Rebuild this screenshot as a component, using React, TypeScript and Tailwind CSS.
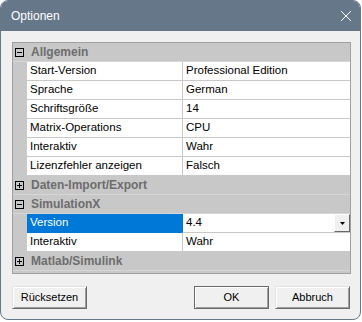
import type { ReactNode } from 'react'

type Prop = { name: string; value: string; selected?: boolean; dropdown?: boolean }
type Category = { title: string; open: boolean; props: Prop[] }

const categories: Category[] = [
  {
    title: 'Allgemein',
    open: true,
    props: [
      { name: 'Start-Version', value: 'Professional Edition' },
      { name: 'Sprache', value: 'German' },
      { name: 'Schriftsgröße', value: '14' },
      { name: 'Matrix-Operations', value: 'CPU' },
      { name: 'Interaktiv', value: 'Wahr' },
      { name: 'Lizenzfehler anzeigen', value: 'Falsch' },
    ],
  },
  { title: 'Daten-Import/Export', open: false, props: [] },
  {
    title: 'SimulationX',
    open: true,
    props: [
      { name: 'Version', value: '4.4', selected: true, dropdown: true },
      { name: 'Interaktiv', value: 'Wahr' },
    ],
  },
  { title: 'Matlab/Simulink', open: false, props: [] },
]

function ExpandBox({ open }: { open: boolean }) {
  return (
    <svg width="9" height="9" viewBox="0 0 9 9" className="block">
      <rect x="0.5" y="0.5" width="8" height="8" fill="none" stroke="#000" />
      <line x1="2" y1="4.5" x2="7" y2="4.5" stroke="#000" />
      {!open && <line x1="4.5" y1="2" x2="4.5" y2="7" stroke="#000" />}
    </svg>
  )
}

function CategoryRow({ title, open }: { title: string; open: boolean }) {
  return (
    <div className="flex h-[19px] items-center bg-[#c8c8c8] border-b border-[#d6d6d6]">
      <div className="w-[14px] pl-[2px] shrink-0">
        <ExpandBox open={open} />
      </div>
      <div className="pl-[4px] text-[12px] font-bold text-[#6d6d6d] leading-none">{title}</div>
    </div>
  )
}

function PropRow({ p }: { p: Prop }) {
  return (
    <div className="flex h-[19px]">
      <div className="w-[14px] shrink-0 bg-[#c8c8c8]" />
      <div
        className={`w-[155px] shrink-0 flex items-center pl-[3px] border-b ${
          p.selected ? 'bg-[#0078d7] text-white border-[#0078d7]' : 'bg-white text-black border-[#c8c8c8]'
        }`}
      >
        {p.name}
      </div>
      <div
        className={`flex-1 flex items-center bg-white border-b border-[#c8c8c8] border-l ${
          p.selected ? 'border-l-[#0078d7]' : 'border-l-[#c8c8c8]'
        }`}
      >
        <span className="pl-[3px] flex-1">{p.value}</span>
        {p.dropdown && (
          <div className="w-[16px] h-[18px] self-start bg-[#f0f0f0] border border-t-white border-l-white border-b-[#696969] border-r-[#696969] flex items-center justify-center">
            <svg width="5" height="3" viewBox="0 0 5 3">
              <polygon points="0,0 5,0 2.5,3" fill="#000" />
            </svg>
          </div>
        )}
      </div>
    </div>
  )
}

function Button({ children, isDefault }: { children: ReactNode; isDefault?: boolean }) {
  return (
    <button
      className={`w-[75px] h-[23px] bg-[#f0f0f0] text-[11px] text-black border ${
        isDefault
          ? 'border-[#696969] shadow-[inset_1px_1px_0_#fff,inset_-1px_-1px_0_#a0a0a0]'
          : 'border-t-[#e3e3e3] border-l-[#e3e3e3] border-b-[#696969] border-r-[#696969] shadow-[inset_1px_1px_0_#fff,inset_-1px_-1px_0_#a0a0a0]'
      }`}
    >
      {children}
    </button>
  )
}

export default function App() {
  return (
    <div className="w-[362px] h-[322px] bg-white" style={{ fontFamily: '"Liberation Sans", Arial, sans-serif' }}>
      <div className="w-[361px] h-[320px] rounded-[8px] border border-[#66778a] bg-[#f0f0f0] overflow-hidden flex flex-col">
        {/* Title bar */}
        <div className="h-[30px] bg-[#66778a] flex items-center justify-between shrink-0">
          <span className="pl-[10px] text-white text-[12px]">Optionen</span>
          <svg width="10" height="10" viewBox="0 0 10 10" className="mr-[9px]">
            <line x1="0" y1="0" x2="10" y2="10" stroke="#fff" strokeWidth="1" />
            <line x1="10" y1="0" x2="0" y2="10" stroke="#fff" strokeWidth="1" />
          </svg>
        </div>

        {/* Property grid */}
        <div className="pl-[11px] pt-[11px]">
          <div className="w-[339px] border border-[#a0a0a0] bg-[#c8c8c8] text-[11.5px] leading-none">
            {categories.map(c => (
              <div key={c.title}>
                <CategoryRow title={c.title} open={c.open} />
                {c.props.map(p => (
                  <PropRow key={c.title + p.name} p={p} />
                ))}
              </div>
            ))}
            <div className="h-[2px]" />
          </div>
        </div>

        {/* Buttons */}
        <div className="flex pl-[11px] pr-[10px] pt-[12px]">
          <Button>Rücksetzen</Button>
          <div className="flex-1" />
          <div className="flex gap-[6px]">
            <Button isDefault>OK</Button>
            <Button>Abbruch</Button>
          </div>
        </div>
      </div>
    </div>
  )
}
